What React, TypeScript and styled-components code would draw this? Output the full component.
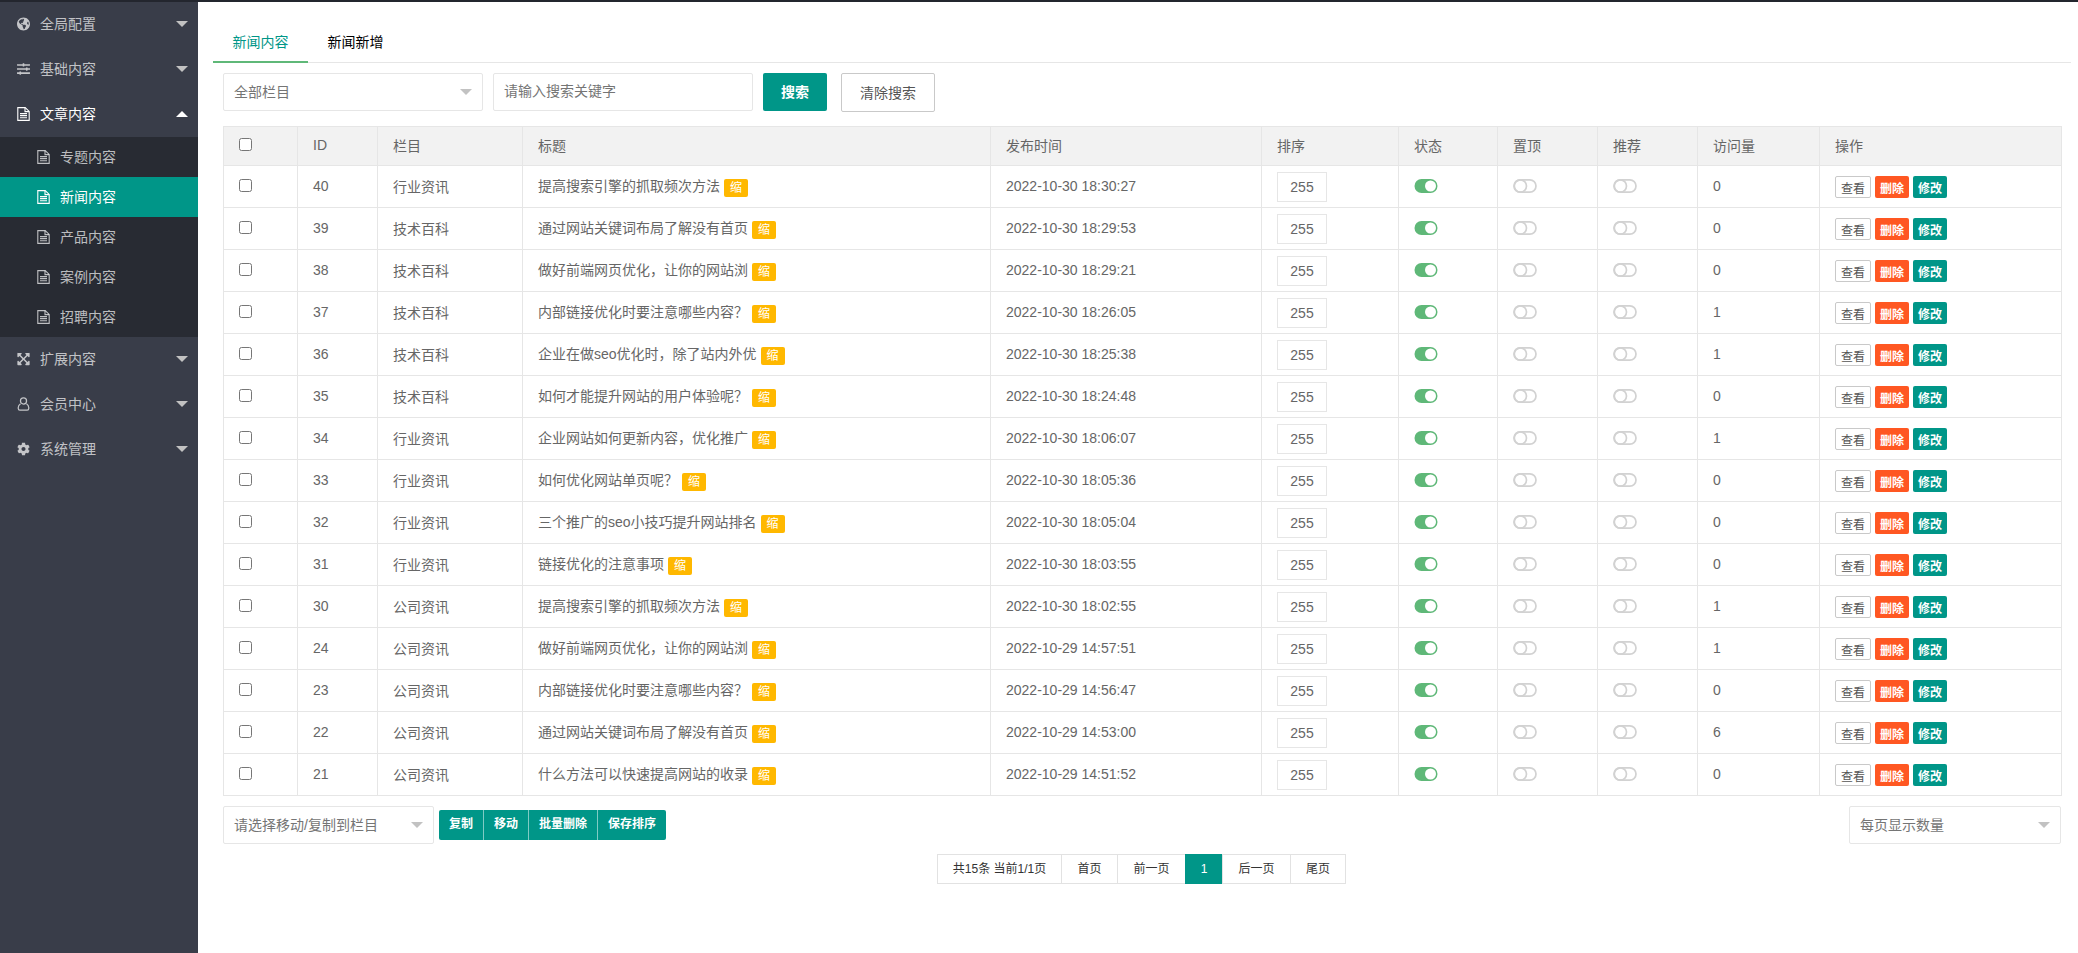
import React, { FC } from 'react';
import styled, { createGlobalStyle } from 'styled-components';
import { FaGlobeAmericas, FaSlidersH, FaExpandArrowsAlt, FaCog } from 'react-icons/fa';

const GlobalStyle = createGlobalStyle`
  html, body {
    margin: 0;
    padding: 0;
    background: #fff;
  }
  body {
    font-family: "Liberation Sans", "Noto Sans CJK SC", sans-serif;
    font-size: 14px;
    color: #666;
  }
  * {
    box-sizing: border-box;
  }
`;

const Page = styled.div`
  display: flex;
  height: 953px;
  border-top: 2px solid #23262e;
  overflow: hidden;
`;

const Sidebar = styled.nav`
  width: 198px;
  flex: none;
  background: #393d49;
`;

const NavItem = styled.div<{ $open?: boolean }>`
  display: flex;
  align-items: center;
  height: 45px;
  padding: 0 10px 1px 17px;
  color: ${(p) => (p.$open ? '#fff' : 'rgba(255, 255, 255, 0.7)')};
  & > svg {
    width: 13px;
    height: 14px;
    margin-right: 10px;
    flex: none;
  }
  & > span {
    flex: 1;
    padding-bottom: 3px;
  }
`;

const Caret = styled.i<{ $up?: boolean }>`
  width: 0;
  height: 0;
  margin-bottom: 1px;
  border-left: 6px solid transparent;
  border-right: 6px solid transparent;
  border-top: ${(p) => (p.$up ? '0' : '6px solid #c2c2c2')};
  border-bottom: ${(p) => (p.$up ? '6px solid #fff' : '0')};
`;

const SubNav = styled.div`
  background: #282b33;
`;

const SubItem = styled.div<{ $active?: boolean }>`
  display: flex;
  align-items: center;
  height: 40px;
  padding: 0 0 2px 37px;
  background: ${(p) => (p.$active ? '#009688' : 'transparent')};
  color: ${(p) => (p.$active ? '#fff' : 'rgba(255, 255, 255, 0.7)')};
  & > svg {
    width: 13px;
    height: 14px;
    margin: 2px 10px 0 0;
  }
`;

const Main = styled.main`
  flex: 1;
  min-width: 0;
  padding: 20px 7px 0 15px;
`;

const Tabs = styled.div`
  display: flex;
  height: 41px;
  border-bottom: 1px solid #e6e6e6;
`;

const Tab = styled.div<{ $active?: boolean }>`
  width: 95px;
  height: 41px;
  line-height: 40px;
  text-align: center;
  color: ${(p) => (p.$active ? '#009688' : '#000')};
  border-bottom: 2px solid ${(p) => (p.$active ? '#5fb878' : 'transparent')};
`;

const Content = styled.div`
  padding: 10px 10px 0;
`;

const FilterBar = styled.div`
  display: flex;
  align-items: flex-start;
  gap: 10px;
  margin-bottom: 14px;
`;

const SelectBox = styled.div<{ $width: number }>`
  display: flex;
  align-items: center;
  justify-content: space-between;
  width: ${(p) => p.$width}px;
  height: 38px;
  padding: 0 10px 2px;
  border: 1px solid #e6e6e6;
  background: #fff;
  color: #757575;
  border-radius: 2px;
`;

const SelectCaret = styled.i`
  width: 0;
  height: 0;
  margin-top: 2px;
  border-left: 6px solid transparent;
  border-right: 6px solid transparent;
  border-top: 6px solid #c2c2c2;
`;

const SearchInput = styled.input`
  width: 260px;
  height: 38px;
  padding: 0 10px 2px;
  border: 1px solid #e6e6e6;
  border-radius: 2px;
  outline: none;
  font: inherit;
  &::placeholder {
    color: #757575;
    opacity: 1;
  }
`;

const SearchButton = styled.button`
  width: 64px;
  height: 38px;
  padding: 0 0 2px;
  border: 0;
  border-radius: 2px;
  background: #009688;
  color: #fff;
  font: inherit;
  font-weight: 700;
`;

const ClearButton = styled.button`
  width: 94px;
  height: 39px;
  margin-left: 4px;
  padding: 0 0 2px;
  border: 1px solid #c9c9c9;
  border-radius: 2px;
  background: #fff;
  color: #555;
  font: inherit;
`;

const Table = styled.table`
  width: 1838px;
  table-layout: fixed;
  border-collapse: collapse;
`;

const Col = styled.col<{ $width: number }>`
  width: ${(p) => p.$width}px;
`;

const Th = styled.th`
  height: 39px;
  padding: 0 15px 3px;
  border: 1px solid #e6e6e6;
  background: #f2f2f2;
  font-weight: 400;
  text-align: left;
`;

const Td = styled.td`
  height: 42px;
  padding: 0 15px 1px;
  border: 1px solid #e6e6e6;
  white-space: nowrap;
`;

const Check = styled.input.attrs({ type: 'checkbox' })`
  display: block;
  width: 13px;
  height: 13px;
  margin: 0 0 1px;
`;

const ShrinkTag = styled.span`
  display: inline-block;
  width: 24px;
  height: 18px;
  margin-left: 4px;
  line-height: 18px;
  border-radius: 2px;
  background: #ffb800;
  color: #fff;
  font-size: 12px;
  text-align: center;
  vertical-align: middle;
`;

const OrderInput = styled.input`
  display: block;
  width: 50px;
  height: 30px;
  margin-top: 2px;
  padding: 0;
  border: 1px solid #e6e6e6;
  outline: none;
  color: #666;
  font: inherit;
  text-align: center;
`;

const ToggleSvg = styled.svg`
  display: block;
  width: 24px;
  height: 14px;
`;

const Actions = styled.div`
  display: flex;
  align-items: center;
  gap: 4px;
  margin-top: 2px;
`;

const XsButton = styled.button<{ $tone: string; $plain?: boolean }>`
  width: ${(p) => (p.$plain ? 36 : 34)}px;
  height: 22px;
  padding: 0;
  border: ${(p) => (p.$plain ? '1px solid #c9c9c9' : '0')};
  border-radius: 2px;
  background: ${(p) => p.$tone};
  color: ${(p) => (p.$plain ? '#555' : '#fff')};
  font: inherit;
  font-size: 12px;
  font-weight: ${(p) => (p.$plain ? 400 : 700)};
`;

const BottomBar = styled.div`
  display: flex;
  align-items: center;
  justify-content: space-between;
  margin-top: 10px;
`;

const BottomLeft = styled.div`
  display: flex;
  align-items: center;
  gap: 5px;
`;

const ButtonGroup = styled.div`
  display: flex;
  height: 30px;
  border-radius: 2px;
  overflow: hidden;
  background: #009688;
  color: #fff;
  font-size: 12px;
  font-weight: 700;
`;

const GroupButton = styled.div`
  padding: 0 10px;
  line-height: 29px;
  & + & {
    border-left: 1px solid rgba(255, 255, 255, 0.5);
  }
`;

const Pager = styled.div`
  display: flex;
  justify-content: center;
  margin-top: 10px;
`;

const PageCell = styled.div<{ $width: number; $active?: boolean }>`
  width: ${(p) => p.$width}px;
  height: 30px;
  margin-left: -1px;
  line-height: 28px;
  text-align: center;
  border: 1px solid ${(p) => (p.$active ? '#009688' : '#e2e2e2')};
  background: ${(p) => (p.$active ? '#009688' : '#fff')};
  color: ${(p) => (p.$active ? '#fff' : '#333')};
  font-size: 12px;
`;

const DocIcon: FC = () => (
  <svg viewBox="0 0 13 14" fill="none" stroke="currentColor" strokeWidth="1.1">
    <path d="M.8.6h7.4l4 3.8v9H.8z" />
    <path d="M8 .8v3.8h4M3 6.6h7M3 8.6h7M3 10.8h7" />
  </svg>
);

const UserIcon: FC = () => (
  <svg viewBox="0 0 14 16" fill="none" stroke="currentColor" strokeWidth="1.4">
    <circle cx="7" cy="4.6" r="3.5" />
    <path d="M3.6 7.6C2 8.6 1 10 1 12v1.2C1 14.3 1.8 15 2.8 15h8.4c1 0 1.8-.7 1.8-1.8V12c0-2-1-3.4-2.6-4.4" />
  </svg>
);

const Toggle: FC<{ on?: boolean }> = ({ on }) =>
  on ? (
    <ToggleSvg viewBox="0 0 24 14">
      <rect x="0.5" width="23" height="14" rx="7" fill="#5fb878" />
      <circle cx="16.5" cy="7" r="5.5" fill="#fff" />
    </ToggleSvg>
  ) : (
    <ToggleSvg viewBox="0 0 24 14" fill="none" stroke="#d2d2d2" strokeWidth="1.7">
      <rect x="1" y="0.9" width="22" height="12.2" rx="6.1" />
      <circle cx="7.4" cy="7" r="6.1" />
    </ToggleSvg>
  );

const COLUMNS = [74, 80, 145, 468, 271, 137, 99, 100, 100, 122, 242];
const HEADS = ['ID', '栏目', '标题', '发布时间', '排序', '状态', '置顶', '推荐', '访问量', '操作'];

const ROWS: [number, string, string, string, number][] = [
  [40, '行业资讯', '提高搜索引擎的抓取频次方法', '2022-10-30 18:30:27', 0],
  [39, '技术百科', '通过网站关键词布局了解没有首页', '2022-10-30 18:29:53', 0],
  [38, '技术百科', '做好前端网页优化，让你的网站浏', '2022-10-30 18:29:21', 0],
  [37, '技术百科', '内部链接优化时要注意哪些内容？', '2022-10-30 18:26:05', 1],
  [36, '技术百科', '企业在做seo优化时，除了站内外优', '2022-10-30 18:25:38', 1],
  [35, '技术百科', '如何才能提升网站的用户体验呢？', '2022-10-30 18:24:48', 0],
  [34, '行业资讯', '企业网站如何更新内容，优化推广', '2022-10-30 18:06:07', 1],
  [33, '行业资讯', '如何优化网站单页呢？', '2022-10-30 18:05:36', 0],
  [32, '行业资讯', '三个推广的seo小技巧提升网站排名', '2022-10-30 18:05:04', 0],
  [31, '行业资讯', '链接优化的注意事项', '2022-10-30 18:03:55', 0],
  [30, '公司资讯', '提高搜索引擎的抓取频次方法', '2022-10-30 18:02:55', 1],
  [24, '公司资讯', '做好前端网页优化，让你的网站浏', '2022-10-29 14:57:51', 1],
  [23, '公司资讯', '内部链接优化时要注意哪些内容？', '2022-10-29 14:56:47', 0],
  [22, '公司资讯', '通过网站关键词布局了解没有首页', '2022-10-29 14:53:00', 6],
  [21, '公司资讯', '什么方法可以快速提高网站的收录', '2022-10-29 14:51:52', 0],
];

const SUB_ITEMS = ['专题内容', '新闻内容', '产品内容', '案例内容', '招聘内容'];
const PAGES: [string, number][] = [
  ['共15条 当前1/1页', 125],
  ['首页', 57],
  ['前一页', 69],
  ['1', 38],
  ['后一页', 69],
  ['尾页', 56],
];

const App: FC = () => (
  <Page>
    <GlobalStyle />
    <Sidebar>
      <NavItem>
        <FaGlobeAmericas />
        <span>全局配置</span>
        <Caret />
      </NavItem>
      <NavItem>
        <FaSlidersH />
        <span>基础内容</span>
        <Caret />
      </NavItem>
      <NavItem $open>
        <DocIcon />
        <span>文章内容</span>
        <Caret $up />
      </NavItem>
      <SubNav>
        {SUB_ITEMS.map((name) => (
          <SubItem key={name} $active={name === '新闻内容'}>
            <DocIcon />
            {name}
          </SubItem>
        ))}
      </SubNav>
      <NavItem>
        <FaExpandArrowsAlt />
        <span>扩展内容</span>
        <Caret />
      </NavItem>
      <NavItem>
        <UserIcon />
        <span>会员中心</span>
        <Caret />
      </NavItem>
      <NavItem>
        <FaCog />
        <span>系统管理</span>
        <Caret />
      </NavItem>
    </Sidebar>
    <Main>
      <Tabs>
        <Tab $active>新闻内容</Tab>
        <Tab>新闻新增</Tab>
      </Tabs>
      <Content>
        <FilterBar>
          <SelectBox $width={260}>
            全部栏目
            <SelectCaret />
          </SelectBox>
          <SearchInput placeholder="请输入搜索关键字" />
          <SearchButton>搜索</SearchButton>
          <ClearButton>清除搜索</ClearButton>
        </FilterBar>
        <Table>
          <colgroup>
            {COLUMNS.map((w, i) => (
              <Col key={i} $width={w} />
            ))}
          </colgroup>
          <thead>
            <tr>
              <Th>
                <Check />
              </Th>
              {HEADS.map((h) => (
                <Th key={h}>{h}</Th>
              ))}
            </tr>
          </thead>
          <tbody>
            {ROWS.map(([id, cat, title, time, views]) => (
              <tr key={id}>
                <Td>
                  <Check />
                </Td>
                <Td>{id}</Td>
                <Td>{cat}</Td>
                <Td>
                  {title}
                  <ShrinkTag>缩</ShrinkTag>
                </Td>
                <Td>{time}</Td>
                <Td>
                  <OrderInput defaultValue="255" />
                </Td>
                <Td>
                  <Toggle on />
                </Td>
                <Td>
                  <Toggle />
                </Td>
                <Td>
                  <Toggle />
                </Td>
                <Td>{views}</Td>
                <Td>
                  <Actions>
                    <XsButton $tone="#fff" $plain>
                      查看
                    </XsButton>
                    <XsButton $tone="#ff5722">删除</XsButton>
                    <XsButton $tone="#009688">修改</XsButton>
                  </Actions>
                </Td>
              </tr>
            ))}
          </tbody>
        </Table>
        <BottomBar>
          <BottomLeft>
            <SelectBox $width={211}>
              请选择移动/复制到栏目
              <SelectCaret />
            </SelectBox>
            <ButtonGroup>
              <GroupButton>复制</GroupButton>
              <GroupButton>移动</GroupButton>
              <GroupButton>批量删除</GroupButton>
              <GroupButton>保存排序</GroupButton>
            </ButtonGroup>
          </BottomLeft>
          <SelectBox $width={212}>
            每页显示数量
            <SelectCaret />
          </SelectBox>
        </BottomBar>
        <Pager>
          {PAGES.map(([label, width]) => (
            <PageCell key={label} $width={width} $active={label === '1'}>
              {label}
            </PageCell>
          ))}
        </Pager>
      </Content>
    </Main>
  </Page>
);

export default App;
